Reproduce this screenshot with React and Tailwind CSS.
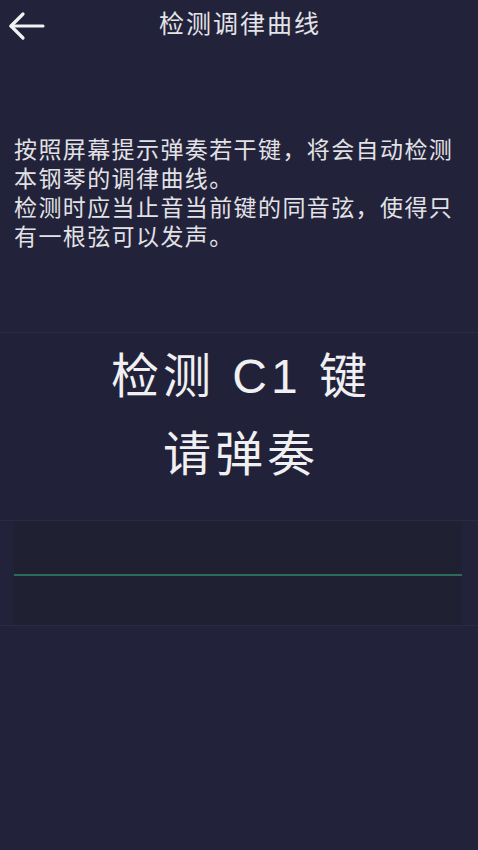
const font = { fontFamily: '"Liberation Sans", "Noto Sans CJK SC", sans-serif' };

function BackArrow() {
  return (
    <svg width="38" height="30" viewBox="0 0 38 30" fill="none" stroke="#f2f2f2" strokeWidth="3.2" strokeLinecap="round" strokeLinejoin="round">
      <path d="M3 15 H35" />
      <path d="M15 3 L3 15 L15 27" />
    </svg>
  );
}

export default function App() {
  return (
    <div style={font} className="flex min-h-[850px] w-full flex-col bg-[#22233a] text-[#e6e6ea]">
      <header className="relative flex h-[52px] items-center justify-center">
        <button className="absolute left-[8px] top-[11px]">
          <BackArrow />
        </button>
        <h1 className="-mt-[2px] pl-[2px] text-[25px] font-normal tracking-[2px] text-[#e4e4e8]">检测调律曲线</h1>
      </header>

      <p className="mt-[84px] pl-[14px] pr-[10px] text-[23px] leading-[29px] tracking-[1.4px] text-[#e2e2e6]">
        按照屏幕提示弹奏若干键，将会自动检测本钢琴的调律曲线。
        <br />
        检测时应当止音当前键的同音弦，使得只有一根弦可以发声。
      </p>

      <section className="mt-[80px] flex h-[189px] flex-col items-center border-y border-[#2a2b42] bg-[#21223a] pt-[13px]">
        <div className="pl-[4px] text-[48px] leading-[62px] tracking-[4px] text-[#f0f0f2]">检测 C1 键</div>
        <div className="mt-[16px] pl-[4px] text-[48px] leading-[62px] tracking-[4px] text-[#f0f0f2]">请弹奏</div>
      </section>

      <section className="flex h-[105px] items-stretch border-b border-[#2a2b42] pl-[14px] pr-[16px]">
        <div className="flex flex-1 items-center bg-[#1f2133]">
          <div className="mt-[3px] h-[2px] w-full bg-[#2b6b58]" />
        </div>
      </section>
    </div>
  );
}
